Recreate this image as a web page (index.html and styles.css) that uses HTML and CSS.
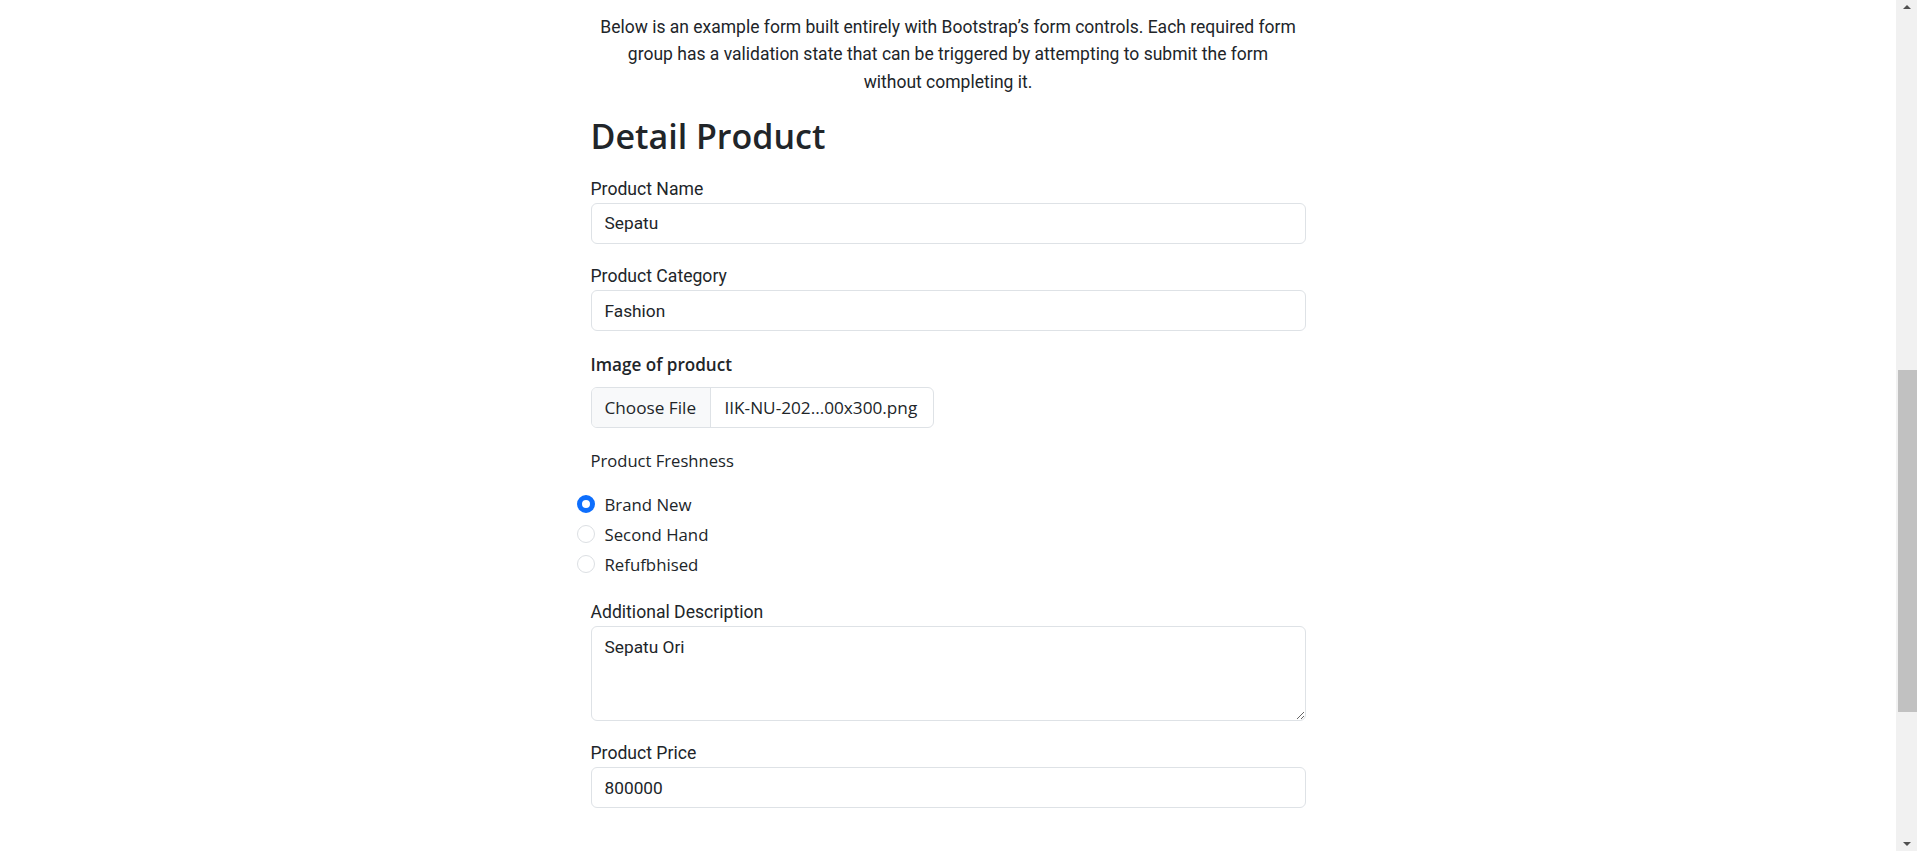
FILE: index.html
```html
<!DOCTYPE html>
<html lang="en">
<head>
<meta charset="utf-8">
<title>Detail Product</title>
<link rel="stylesheet" href="styles.css">
</head>
<body>
<div class="page">
  <main class="main">
    <div class="container">
      <p class="lead">Below is an example form built entirely with Bootstrap’s form controls. Each required form<br>group has a validation state that can be triggered by attempting to submit the form<br>without completing it.</p>
      <h2 class="title">Detail Product</h2>
      <form class="form">
        <div class="field">
          <label class="label">Product Name</label>
          <input class="control" type="text" value="Sepatu">
        </div>
        <div class="field">
          <label class="label">Product Category</label>
          <input class="control" type="text" value="Fashion">
        </div>
        <div class="field">
          <div class="label label-strong">Image of product</div>
          <div class="file">
            <span class="file-btn">Choose File</span>
            <span class="file-name">IIK-NU-202...00x300.png</span>
          </div>
        </div>
        <div class="field">
          <div class="label label-wide">Product Freshness</div>
          <div class="radios">
            <label class="radio"><input class="radio-input" type="radio" name="fresh" checked><span>Brand New</span></label>
            <label class="radio"><input class="radio-input" type="radio" name="fresh"><span>Second Hand</span></label>
            <label class="radio"><input class="radio-input" type="radio" name="fresh"><span>Refufbhised</span></label>
          </div>
        </div>
        <div class="field">
          <label class="label">Additional Description</label>
          <textarea class="control area">Sepatu Ori</textarea>
        </div>
        <div class="field">
          <label class="label">Product Price</label>
          <input class="control" type="text" value="800000">
        </div>
      </form>
    </div>
  </main>
  <div class="scrollbar">
    <div class="sb-arrow sb-up"></div>
    <div class="sb-track">
      <div class="sb-thumb"></div>
    </div>
    <div class="sb-arrow sb-down"></div>
  </div>
</div>
</body>
</html>
```
FILE: styles.css
```css
* { box-sizing: border-box; }
html, body { margin: 0; padding: 0; height: 100%; overflow: hidden; background: #fff; }
body { color: #212529; font-family: Roboto, "Liberation Sans", sans-serif; }

.page { display: flex; height: 851px; }
.main { flex: 1; overflow: hidden; }
.container { width: 715px; margin: 0 auto; }

.lead {
  margin: 14px 0 0;
  font-size: 17.5px;
  line-height: 27.3px;
  text-align: center;
  color: #212529;
}
.title {
  margin: 19px 0 19px;
  font-family: "Open Sans", sans-serif;
  font-weight: 600;
  font-size: 34px;
  line-height: 42px;
  color: #212529;
}

.form { display: flex; flex-direction: column; gap: 19.5px; }
.field { display: flex; flex-direction: column; }
.label {
  display: block;
  font-size: 17.6px;
  line-height: 27px;
}
.label-strong {
  font-family: "Open Sans", sans-serif;
  font-weight: 600;
  font-size: 17.1px;
  margin-bottom: 9px;
}
.label-wide {
  font-family: "Open Sans", sans-serif;
  font-size: 16.6px;
}

.control {
  display: block;
  width: 100%;
  height: 41px;
  padding: 0 13px;
  border: 1px solid #dee2e6;
  border-radius: 6px;
  background: #fff;
  font-family: Roboto, sans-serif;
  font-size: 17.3px;
  color: #212529;
  outline: none;
}
.area {
  height: 95px;
  padding: 7px 13px;
  line-height: 26px;
  resize: vertical;
}

.file {
  display: flex;
  width: 343px;
  height: 41px;
  border: 1px solid #dee2e6;
  border-radius: 6px;
  overflow: hidden;
  font-family: "Open Sans", sans-serif;
  font-size: 17.2px;
  white-space: nowrap;
}
.file-btn {
  flex: none;
  display: flex;
  align-items: center;
  padding: 0 0 0 13px;
  width: 119px;
  background: #f8f9fa;
  border-right: 1px solid #dee2e6;
  color: #212529;
}
.file-name {
  display: flex;
  align-items: center;
  padding-left: 14px;
  color: #212529;
}

.radios { display: flex; flex-direction: column; margin-top: 15px; margin-left: -14px; }
.radio {
  display: flex;
  align-items: center;
  height: 30px;
  gap: 10px;
  font-family: "Open Sans", sans-serif;
  font-size: 16.8px;
}
.radio-input {
  appearance: none;
  -webkit-appearance: none;
  margin: 0;
  width: 18px;
  height: 18px;
  border: 1px solid #dcdfe3;
  border-radius: 50%;
  background: #fff;
  flex: none;
}
.radio-input:checked {
  border: 5.5px solid #0d6efd;
  background: #fff;
}

.scrollbar {
  width: 21px;
  flex: none;
  display: flex;
  flex-direction: column;
  background: #f1f1f1;
}
.sb-arrow { height: 17px; flex: none; display: flex; justify-content: center; }
.sb-up::before {
  content: "";
  margin-top: 5px;
  border-left: 4.5px solid transparent;
  border-right: 4.5px solid transparent;
  border-bottom: 4.5px solid #505050;
  height: 0;
}
.sb-down { align-items: flex-end; }
.sb-down::before {
  content: "";
  margin-bottom: 5px;
  border-left: 4.5px solid transparent;
  border-right: 4.5px solid transparent;
  border-top: 4.5px solid #505050;
  height: 0;
}
.sb-track { flex: 1; display: flex; flex-direction: column; }
.sb-thumb {
  margin: 353px 0 0 2px;
  height: 342px;
  background: #c1c1c1;
}
```
